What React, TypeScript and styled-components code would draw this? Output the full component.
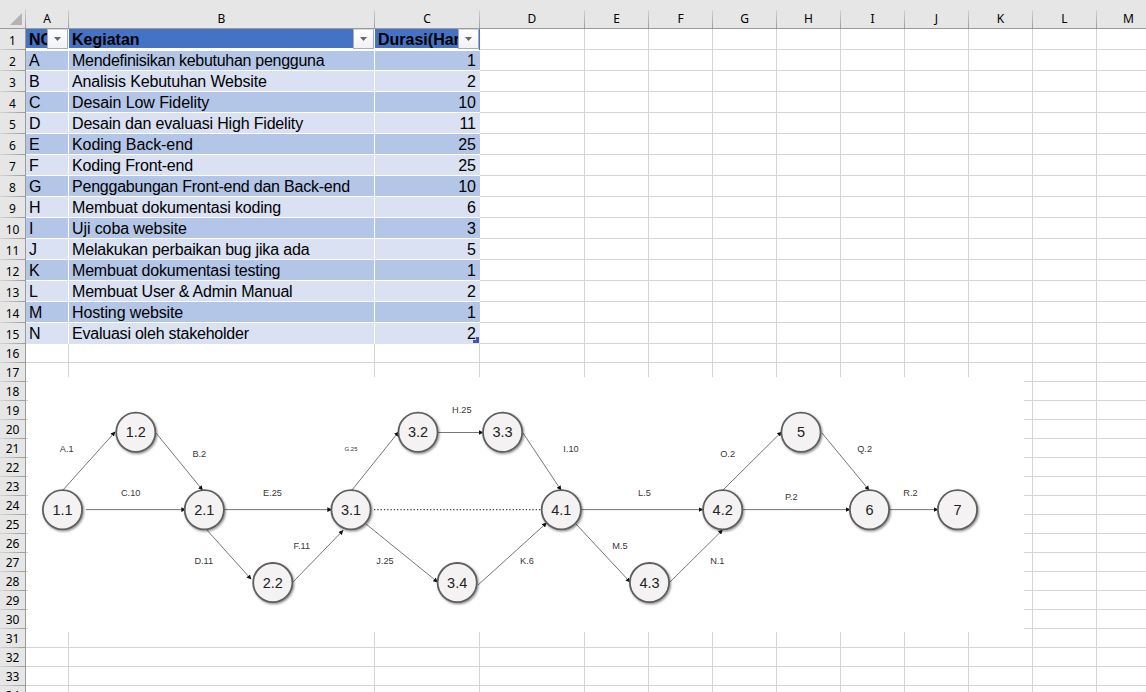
import React from "react";
import styled, { createGlobalStyle } from "styled-components";

const GlobalStyle = createGlobalStyle`
  html, body { margin: 0; padding: 0; overflow: hidden; background: #fff; }
  * { box-sizing: border-box; }
`;

const COLUMNS = "43px 306px 105px 105px repeat(9, 64px)";
const LETTERS = "ABCDEFGHIJKLM".split("");

const Sheet = styled.main`
  position: relative;
  width: 1146px;
  height: 692px;
  overflow: hidden;
  background: #fff;
  font-family: "Liberation Sans", Arial, sans-serif;
  color: #000;
`;

const HeaderRow = styled.div`
  display: flex;
  height: 29px;
  background: #e6e6e6;
  border-bottom: 1px solid #9b9b9b;
`;

const Corner = styled.div`
  flex: none;
  display: flex;
  justify-content: flex-end;
  width: 26px;
  padding: 13px 4px 0 0;
  background: linear-gradient(#d0d0d0, #9b9b9b) right bottom / 1px 19px no-repeat;
`;

const ColumnHeads = styled.div`
  flex: none;
  display: grid;
  grid-template-columns: ${COLUMNS};
`;

const ColumnHead = styled.div`
  padding: 9px 1px 0 0;
  background: linear-gradient(#d0d0d0, #9b9b9b) right bottom / 1px 19px no-repeat;
  font: 12px/20px "Noto Sans", "Open Sans", sans-serif;
  text-align: center;
`;

const Row = styled.div<{ $height: number }>`
  display: flex;
  height: ${(p) => p.$height}px;
`;

const RowHead = styled.div`
  flex: none;
  display: flex;
  align-items: flex-end;
  justify-content: center;
  width: 26px;
  height: 100%;
  padding-bottom: 1px;
  border-right: 1px solid #9b9b9b;
  background: linear-gradient(90deg, #d6d6d6, #9b9b9b) left bottom / 100% 1px no-repeat #e6e6e6;
  font: 12px/17px "Noto Sans", "Open Sans", sans-serif;
`;

const Cells = styled.div`
  flex: none;
  display: grid;
  grid-template-columns: ${COLUMNS};
`;

const Cell = styled.div`
  border-right: 1px solid #d4d4d4;
  border-bottom: 1px solid #d4d4d4;
`;

const TableCell = styled.div<{
  $band: string;
  $right?: boolean;
  $edge?: boolean;
  $last?: boolean;
  $first?: boolean;
  $tracking?: number;
}>`
  position: relative;
  overflow: hidden;
  padding: ${(p) => (p.$first ? 0 : 1)}px ${(p) => (p.$edge ? 4 : 3)}px 0 3px;
  border-top: ${(p) => (p.$first ? "1px solid #fff" : "0")};
  border-right: ${(p) => (p.$edge ? "0" : "1px solid #fff")};
  border-bottom: ${(p) => (p.$last ? "0" : "1px solid #fff")};
  background: ${(p) => p.$band};
  font-size: 16px;
  line-height: 19px;
  letter-spacing: ${(p) => p.$tracking ?? 0}px;
  text-align: ${(p) => (p.$right ? "right" : "left")};
  white-space: nowrap;
`;

const HeadCell = styled.div<{ $edge?: boolean }>`
  position: relative;
  padding: 1px 0 0 3px;
  overflow: hidden;
  border-right: 1px solid ${(p) => (p.$edge ? "#4472c4" : "#fff")};
  background: linear-gradient(#4472c4 19px, #fff 19px);
  font-size: 16px;
  font-weight: 700;
  line-height: 19px;
  white-space: nowrap;
`;

const FilterButton = styled.button`
  position: absolute;
  top: 0;
  right: 0;
  display: flex;
  align-items: center;
  justify-content: center;
  width: 21px;
  height: 20px;
  padding: 0;
  border: 1px solid #a5adbb;
  border-top-color: #d5d9e2;
  background: linear-gradient(#fff, #f0f2f6);
`;

const ResizeHandle = styled.svg`
  position: absolute;
  right: 1px;
  bottom: 1px;
`;

const Picture = styled.figure`
  position: absolute;
  left: 28px;
  top: 377px;
  width: 996px;
  height: 255px;
  margin: 0;
  background: #fff;
`;

/* code, activity, duration in days, tracking of the activity text */
const tasks: [string, string, number, number][] = [
  ["A", "Mendefinisikan kebutuhan pengguna", 1, -0.28],
  ["B", "Analisis Kebutuhan Website", 2, -0.16],
  ["C", "Desain Low Fidelity", 10, -0.08],
  ["D", "Desain dan evaluasi High Fidelity", 11, -0.17],
  ["E", "Koding Back-end", 25, -0.07],
  ["F", "Koding Front-end", 25, -0.16],
  ["G", "Penggabungan Front-end dan Back-end", 10, -0.22],
  ["H", "Membuat dokumentasi koding", 6, -0.17],
  ["I", "Uji coba website", 3, -0.1],
  ["J", "Melakukan perbaikan bug jika ada", 5, -0.17],
  ["K", "Membuat dokumentasi testing", 1, -0.19],
  ["L", "Membuat User & Admin Manual", 2, -0.2],
  ["M", "Hosting website", 1, -0.12],
  ["N", "Evaluasi oleh stakeholder", 2, -0.22],
];

const nodes: [string, number, number][] = [
  ["1.1", 62.5, 509.8], ["1.2", 135.8, 432.3], ["2.1", 204.3, 509.8], ["2.2", 272.8, 582.6],
  ["3.1", 351, 509.8], ["3.2", 418, 432.3], ["3.3", 502.6, 432.3], ["3.4", 457.2, 582.6],
  ["4.1", 561.3, 509.8], ["4.2", 722.7, 509.8], ["4.3", 649.5, 582.6],
  ["5", 801, 432.3], ["6", 869.5, 509.8], ["7", 957.5, 509.8],
];

const edges: [number, number, number, number][] = [
  [63, 490, 115, 432], [156, 433, 202.5, 490], [86, 509.6, 185.5, 509.6], [224, 509.6, 331.5, 509.6],
  [206, 529, 251, 579], [293, 582, 343, 530.5], [352, 490, 398.5, 432], [438, 432.5, 483, 432.5],
  [523, 433, 561, 490], [366, 524, 437.5, 582], [478, 585, 546.5, 523], [581, 509.6, 703, 509.6],
  [576, 524, 630, 582], [670, 582, 722.5, 530], [723, 490, 781.5, 432], [743, 509.6, 850, 509.6],
  [822, 433, 869, 490], [889, 509.6, 938, 509.6],
];

const labels: [string, number, number, number?][] = [
  ["A.1", 66.7, 452], ["B.2", 199.3, 457], ["C.10", 130.7, 495.5], ["D.11", 203.8, 563.5],
  ["E.25", 272.5, 495.5], ["F.11", 301.8, 549], ["G.25", 351, 451, 6], ["H.25", 461.8, 413],
  ["I.10", 571, 452], ["J.25", 385, 563.5], ["K.6", 527, 563.5], ["L.5", 644.5, 495.5],
  ["M.5", 620, 549], ["N.1", 717.3, 563.5], ["O.2", 727.6, 457], ["P.2", 791.2, 500],
  ["Q.2", 864.6, 452], ["R.2", 910.5, 495.5],
];

function Filter({ name }: { name: string }) {
  return (
    <FilterButton aria-label={name}>
      <svg width="7" height="4" viewBox="0 0 7 4"><path d="M0 0H7L3.5 4Z" fill="#666" /></svg>
    </FilterButton>
  );
}

function Network() {
  return (
    <Picture>
      <svg width="996" height="255" viewBox="28 377 996 255" fontFamily="Liberation Sans, Arial, sans-serif" textAnchor="middle">
        <defs>
          <marker id="arrow" markerWidth="5" markerHeight="5" refX="4.2" refY="2.5" orient="auto" markerUnits="userSpaceOnUse">
            <path d="M0 0.2L4.8 2.5L0 4.8Z" fill="#111" />
          </marker>
          <filter id="shadow" x="-20%" y="-20%" width="150%" height="150%">
            <feDropShadow dx="1" dy="1.2" stdDeviation="0.9" floodColor="#000" floodOpacity="0.45" />
          </filter>
        </defs>
        <line x1="374" y1="509.7" x2="541" y2="509.7" stroke="#444" strokeWidth="1.2" strokeDasharray="1.3 2" />
        {edges.map(([x1, y1, x2, y2], i) => (
          <line key={i} x1={x1} y1={y1} x2={x2} y2={y2} stroke="#666" strokeWidth="0.9" markerEnd="url(#arrow)" />
        ))}
        {nodes.map(([id, x, y]) => (
          <g key={id}>
            <circle cx={x} cy={y} r="19.6" fill="#f4f2f3" stroke="#5e5e5e" strokeWidth="1.8" filter="url(#shadow)" />
            <text x={x} y={y + 5} fontSize="14.5" fill="#222">{id}</text>
          </g>
        ))}
        {labels.map(([text, x, y, size]) => (
          <text key={text} x={x} y={y} fontSize={size ?? 9.2} fill="#383838">{text}</text>
        ))}
      </svg>
    </Picture>
  );
}

function RowCells({ row }: { row: number }) {
  const blanks = (from: number) => LETTERS.slice(from).map((l) => <Cell key={l} />);
  if (row === 1) {
    return (
      <Cells>
        <HeadCell>NO<Filter name="Filter NO" /></HeadCell>
        <HeadCell>Kegiatan<Filter name="Filter Kegiatan" /></HeadCell>
        <HeadCell $edge>Durasi(Hari)<Filter name="Filter Durasi" /></HeadCell>
        {blanks(3)}
      </Cells>
    );
  }
  if (row <= 15) {
    const [code, name, days, tracking] = tasks[row - 2];
    const band = row % 2 === 0 ? "#b4c6e7" : "#d9e1f2";
    const shared = { $band: band, $first: row === 2, $last: row === 15 };
    return (
      <Cells>
        <TableCell {...shared}>{code}</TableCell>
        <TableCell {...shared} $tracking={tracking}>{name}</TableCell>
        <TableCell {...shared} $right $edge>
          {days}
          {row === 15 && (
            <ResizeHandle width="6" height="6"><path d="M3 0H6V6H0V3H3Z" fill="#4455b5" /></ResizeHandle>
          )}
        </TableCell>
        {blanks(3)}
      </Cells>
    );
  }
  return <Cells>{blanks(0)}</Cells>;
}

export default function App() {
  return (
    <>
      <GlobalStyle />
      <Sheet>
        <HeaderRow>
          <Corner><svg width="12" height="12"><path d="M12 0V12H0Z" fill="#b3b3b3" /></svg></Corner>
          <ColumnHeads>{LETTERS.map((l) => <ColumnHead key={l}>{l}</ColumnHead>)}</ColumnHeads>
        </HeaderRow>
        {Array.from({ length: 34 }, (_, i) => i + 1).map((row) => (
          <Row key={row} $height={row <= 15 ? 21 : 19}>
            <RowHead>{row}</RowHead>
            <RowCells row={row} />
          </Row>
        ))}
        <Network />
      </Sheet>
    </>
  );
}
